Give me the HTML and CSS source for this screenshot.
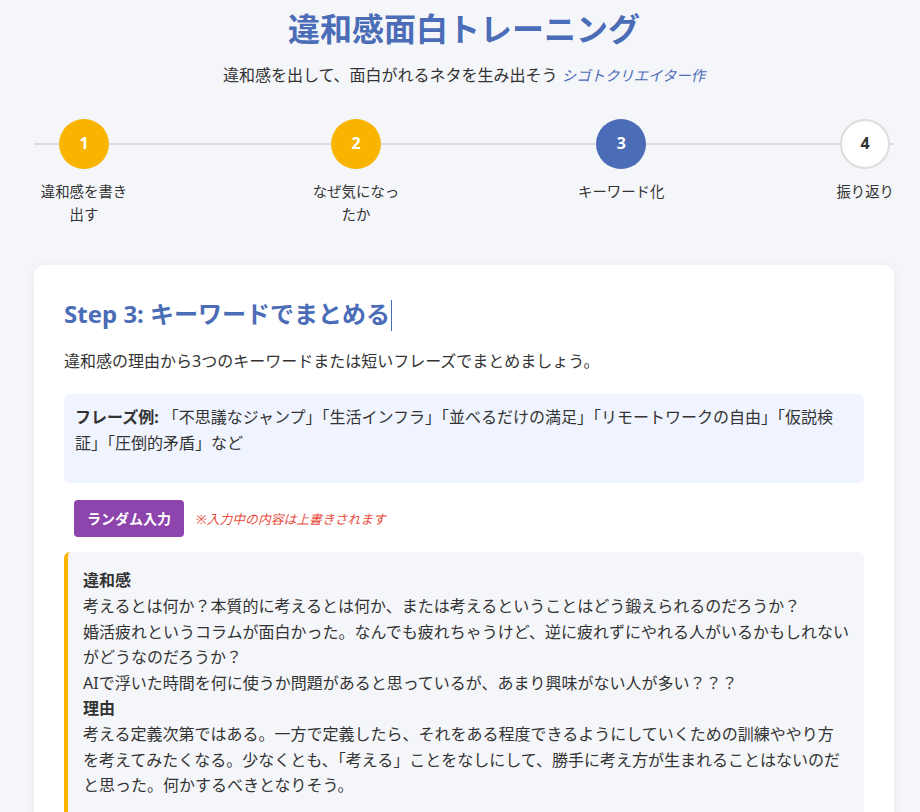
FILE: index.html
```html
<!DOCTYPE html>
<html lang="ja">
<head>
<meta charset="utf-8">
<title>違和感面白トレーニング</title>
<link rel="stylesheet" href="styles.css">
</head>
<body>
<div class="page">
  <header class="header">
    <h1 class="title">違和感面白トレーニング</h1>
    <p class="subtitle">違和感を出して、面白がれるネタを生み出そう <span class="author">シゴトクリエイター作</span></p>
  </header>

  <div class="stepper">
    <div class="step">
      <div class="circle done">1</div>
      <div class="step-label">違和感を書き出す</div>
    </div>
    <div class="step">
      <div class="circle done">2</div>
      <div class="step-label">なぜ気になったか</div>
    </div>
    <div class="step">
      <div class="circle active">3</div>
      <div class="step-label">キーワード化</div>
    </div>
    <div class="step">
      <div class="circle todo">4</div>
      <div class="step-label">振り返り</div>
    </div>
  </div>

  <main class="card">
    <h2 class="card-title">Step 3: キーワードでまとめる<span class="caret"></span></h2>
    <p class="lead">違和感の理由から3つのキーワードまたは短いフレーズでまとめましょう。</p>

    <div class="example">
      <p class="example-text"><strong>フレーズ例:</strong> 「不思議なジャンプ」「生活インフラ」「並べるだけの満足」「リモートワークの自由」「仮説検<br>証」「圧倒的矛盾」など</p>
    </div>

    <div class="action-row">
      <button class="random-btn" type="button">ランダム入力</button>
      <span class="note">※入力中の内容は上書きされます</span>
    </div>

    <div class="quote">
      <div class="quote-label">違和感</div>
      <div class="quote-text">考えるとは何か？本質的に考えるとは何か、または考えるということはどう鍛えられるのだろうか？<br>婚活疲れというコラムが面白かった。なんでも疲れちゃうけど、逆に疲れずにやれる人がいるかもしれない<br>がどうなのだろうか？<br>AIで浮いた時間を何に使うか問題があると思っているが、あまり興味がない人が多い？？？</div>
      <div class="quote-label">理由</div>
      <div class="quote-text">考える定義次第ではある。一方で定義したら、それをある程度できるようにしていくための訓練ややり方<br>を考えてみたくなる。少なくとも、「考える」ことをなしにして、勝手に考え方が生まれることはないのだ<br>と思った。何かするべきとなりそう。</div>
    </div>
  </main>
</div>
</body>
</html>
```

FILE: styles.css
```css
* {
  box-sizing: border-box;
}

body {
  margin: 0;
  background: #f5f6fa;
  color: #333;
  font-family: "Noto Sans", "Noto Sans CJK JP", sans-serif;
  font-size: 16px;
  line-height: 1.6;
}

.page {
  margin: 0 26px 0 34px;
  padding-bottom: 40px;
}

.header {
  text-align: center;
  padding-top: 10px;
}

.title {
  margin: 0;
  font-size: 32px;
  line-height: 38px;
  font-weight: 700;
  color: #4b6cb7;
}

.subtitle {
  margin: 15px 0 0;
  font-size: 16px;
  line-height: 25.6px;
  color: #333;
}

.author {
  font-size: 14.4px;
  font-style: italic;
  color: #4b6cb7;
}

.stepper {
  position: relative;
  display: flex;
  justify-content: space-between;
  align-items: flex-start;
  margin-top: 30px;
}

.stepper::before {
  content: "";
  position: absolute;
  left: 0;
  right: 0;
  top: 24px;
  height: 2px;
  background: #dddddd;
}

.step {
  position: relative;
  display: flex;
  flex-direction: column;
  align-items: center;
  max-width: 100px;
  text-align: center;
}

.circle {
  width: 50px;
  height: 50px;
  border-radius: 50%;
  display: flex;
  align-items: center;
  justify-content: center;
  font-size: 16px;
  font-weight: 700;
  color: #fff;
}

.circle.done {
  background: #f9b400;
}

.circle.active {
  background: #4b6cb7;
}

.circle.todo {
  background: #fff;
  border: 2px solid #dddddd;
  color: #333;
}

.step-label {
  margin-top: 11px;
  font-size: 14.4px;
  line-height: 23px;
  color: #333;
}

.card {
  margin-top: 39px;
  background: #fff;
  border-radius: 10px;
  padding: 32px 30px 40px;
  box-shadow: 0 2px 12px rgba(0, 0, 0, 0.06);
}

.card-title {
  margin: 0 0 18px;
  font-size: 24px;
  line-height: 33.6px;
  font-weight: 700;
  color: #4b6cb7;
}

.caret {
  display: inline-block;
  width: 1px;
  height: 31px;
  margin-left: 1px;
  vertical-align: -8px;
  background: #4b6cb7;
}

.lead {
  margin: 0 0 20px;
  line-height: 25.6px;
}

.example {
  background: #eff4fe;
  border-radius: 6px;
  padding: 11px 12px 12px 11px;
}

.example-text {
  margin: 0 0 15px;
  line-height: 25.6px;
}

.example-text strong {
  font-weight: 700;
}

.action-row {
  display: flex;
  align-items: center;
  gap: 12px;
  margin: 17px 0 15px;
  padding-left: 10px;
}

.random-btn {
  font-family: inherit;
  font-size: 14px;
  font-weight: 700;
  line-height: 21px;
  color: #fff;
  background: #8e44ad;
  border: none;
  border-radius: 4px;
  padding: 8px 13px;
  cursor: pointer;
}

.note {
  font-size: 12.8px;
  font-style: italic;
  color: #e74c3c;
}

.quote {
  background: #f5f6fa;
  border-left: 4px solid #f9b400;
  border-radius: 6px;
  padding: 16px 10px 20px 15px;
  line-height: 25.6px;
}

.quote-label {
  font-weight: 700;
}

.quote-text {
  margin: 0;
}
```
